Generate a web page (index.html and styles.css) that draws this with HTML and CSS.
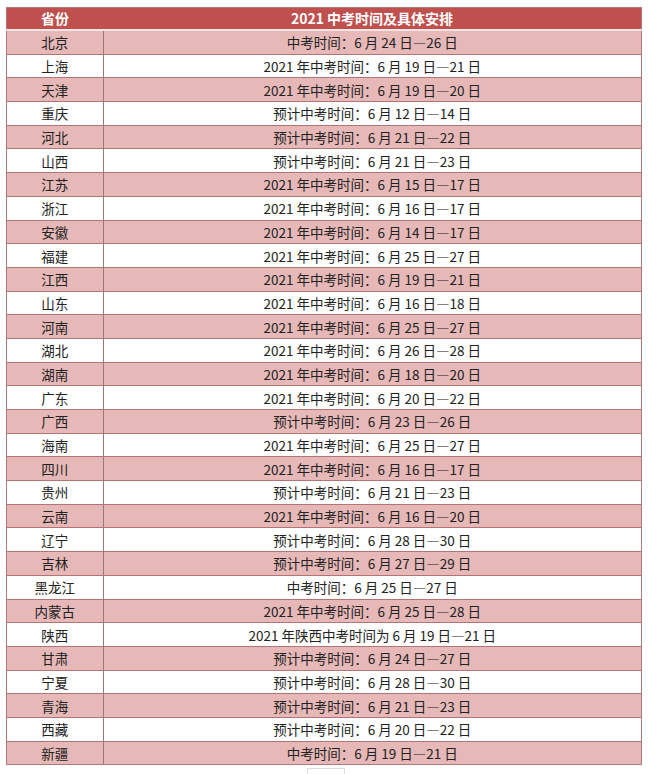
FILE: index.html
```html
<!DOCTYPE html>
<html lang="zh-CN">
<head>
<meta charset="utf-8">
<link rel="stylesheet" href="styles.css">
</head>
<body>
<table class="exam">
  <thead>
    <tr><th class="prov">省份</th><th class="plan">2021 中考时间及具体安排</th></tr>
  </thead>
  <tbody>
    <tr class="pink"><td>北京</td><td>中考时间：6 月 24 日—26 日</td></tr>
    <tr><td>上海</td><td>2021 年中考时间：6 月 19 日—21 日</td></tr>
    <tr class="pink"><td>天津</td><td>2021 年中考时间：6 月 19 日—20 日</td></tr>
    <tr><td>重庆</td><td>预计中考时间：6 月 12 日—14 日</td></tr>
    <tr class="pink"><td>河北</td><td>预计中考时间：6 月 21 日—22 日</td></tr>
    <tr><td>山西</td><td>预计中考时间：6 月 21 日—23 日</td></tr>
    <tr class="pink"><td>江苏</td><td>2021 年中考时间：6 月 15 日—17 日</td></tr>
    <tr><td>浙江</td><td>2021 年中考时间：6 月 16 日—17 日</td></tr>
    <tr class="pink"><td>安徽</td><td>2021 年中考时间：6 月 14 日—17 日</td></tr>
    <tr><td>福建</td><td>2021 年中考时间：6 月 25 日—27 日</td></tr>
    <tr class="pink"><td>江西</td><td>2021 年中考时间：6 月 19 日—21 日</td></tr>
    <tr><td>山东</td><td>2021 年中考时间：6 月 16 日—18 日</td></tr>
    <tr class="pink"><td>河南</td><td>2021 年中考时间：6 月 25 日—27 日</td></tr>
    <tr><td>湖北</td><td>2021 年中考时间：6 月 26 日—28 日</td></tr>
    <tr class="pink"><td>湖南</td><td>2021 年中考时间：6 月 18 日—20 日</td></tr>
    <tr><td>广东</td><td>2021 年中考时间：6 月 20 日—22 日</td></tr>
    <tr class="pink"><td>广西</td><td>预计中考时间：6 月 23 日—26 日</td></tr>
    <tr><td>海南</td><td>2021 年中考时间：6 月 25 日—27 日</td></tr>
    <tr class="pink"><td>四川</td><td>2021 年中考时间：6 月 16 日—17 日</td></tr>
    <tr><td>贵州</td><td>预计中考时间：6 月 21 日—23 日</td></tr>
    <tr class="pink"><td>云南</td><td>2021 年中考时间：6 月 16 日—20 日</td></tr>
    <tr><td>辽宁</td><td>预计中考时间：6 月 28 日—30 日</td></tr>
    <tr class="pink"><td>吉林</td><td>预计中考时间：6 月 27 日—29 日</td></tr>
    <tr><td>黑龙江</td><td>中考时间：6 月 25 日—27 日</td></tr>
    <tr class="pink"><td>内蒙古</td><td>2021 年中考时间：6 月 25 日—28 日</td></tr>
    <tr><td>陕西</td><td>2021 年陕西中考时间为 6 月 19 日—21 日</td></tr>
    <tr class="pink"><td>甘肃</td><td>预计中考时间：6 月 24 日—27 日</td></tr>
    <tr><td>宁夏</td><td>预计中考时间：6 月 28 日—30 日</td></tr>
    <tr class="pink"><td>青海</td><td>预计中考时间：6 月 21 日—23 日</td></tr>
    <tr><td>西藏</td><td>预计中考时间：6 月 20 日—22 日</td></tr>
    <tr class="pink"><td>新疆</td><td>中考时间：6 月 19 日—21 日</td></tr>
  </tbody>
</table>
<div class="mark"></div>
</body>
</html>
```
FILE: styles.css
```css
html, body {
  margin: 0;
  padding: 0;
  background: #ffffff;
}
body {
  font-family: "Noto Sans CJK SC", "Noto Sans", sans-serif;
  color: #222222;
  font-size: 13.5px;
}
.exam {
  margin: 7px 0 0 6px;
  width: 636px;
  border-collapse: collapse;
  table-layout: fixed;
  border: 1px solid #b07878;
}
.exam th {
  background: #c0504d;
  color: #ffffff;
  font-weight: bold;
  font-size: 14px;
  height: 21px;
  padding: 0;
  line-height: 21px;
  text-align: center;
  border-bottom: 2px solid #f3e6e6;
}
.exam th.prov {
  width: 96px;
}
.exam td {
  height: 22.7px;
  padding: 0;
  line-height: 18px;
  text-align: center;
  border-top: 1px solid #b27474;
  white-space: nowrap;
}
.exam td:first-child {
  border-right: 1px solid #9c7878;
}
.exam tr.pink td {
  background: #e6b8b7;
}
.mark {
  margin: 3px 0 0 307px;
  width: 36px;
  height: 6px;
  border: 1px solid #dddddd;
  border-bottom: none;
}
```
